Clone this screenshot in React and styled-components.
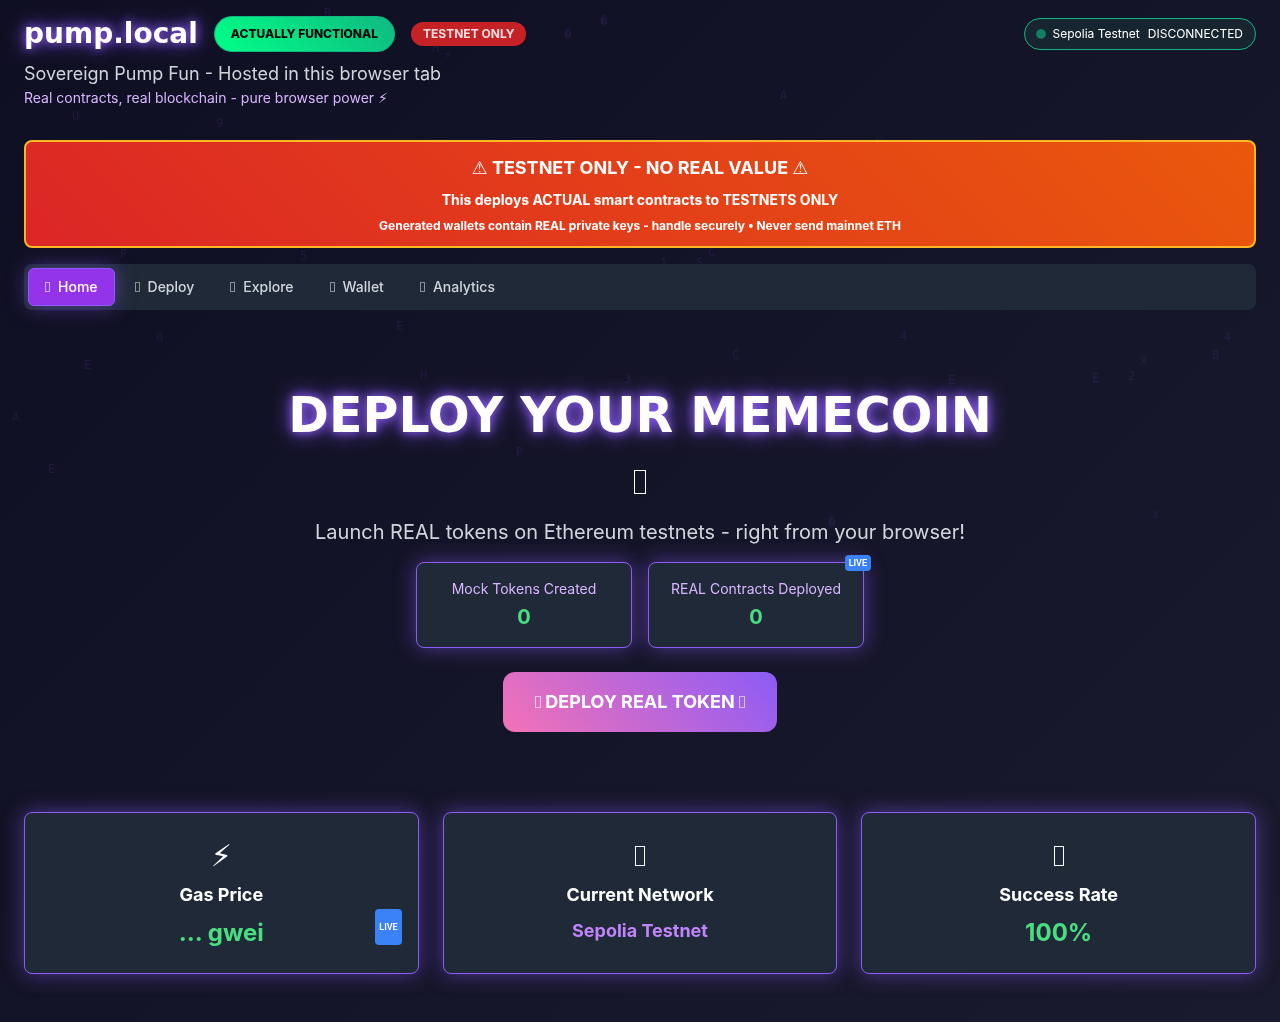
import styled, { createGlobalStyle, css } from "styled-components";

const GlobalStyle = createGlobalStyle`
  * {
    box-sizing: border-box;
    margin: 0;
    padding: 0;
  }
  body {
    min-height: 100vh;
    background: linear-gradient(135deg, #0f0f23 0%, #1a1a2e 100%);
    color: #fff;
    font-family: Inter, "Liberation Sans", sans-serif;
    font-size: 16px;
    line-height: 24px;
  }
`;

// BACKGROUND
const Rain = styled.div`
  position: fixed;
  inset: 0;
  overflow: hidden;
  pointer-events: none;
  user-select: none;
`;
const RainDrop = styled.span`
  position: absolute;
  color: #8b5cf6;
  opacity: 0.12;
  font-family: "DejaVu Sans Mono", monospace;
  font-size: 12px;
  line-height: 14px;
`;
// END BACKGROUND

const Page = styled.div`
  position: relative;
  padding: 16px 24px 48px;
`;
const glow = css`
  box-shadow: 0 0 20px rgba(139, 92, 246, 0.5);
`;

// SYMBOLS
const Symbol = styled.span`
  font-family: "DejaVu Sans", sans-serif;
  font-variant-emoji: text;
`;
const Box = styled.span`
  display: inline-block;
  width: ${(p) => p.$size[0]}px;
  height: ${(p) => p.$size[1]}px;
  border: 1px solid currentColor;
  opacity: ${(p) => (p.$dim ? 0.6 : 1)};
`;
// END SYMBOLS

// HEADER
const Header = styled.header`
  display: flex;
  justify-content: space-between;
  align-items: flex-start;
  margin-bottom: 32px;
`;
const Brand = styled.div`
  display: flex;
  align-items: center;
  gap: 16px;
  height: 36px;
  margin-bottom: 8px;
`;
const Logo = styled.h1`
  font-family: "DejaVu Sans", sans-serif;
  font-size: 28px;
  font-weight: 700;
  line-height: 36px;
  text-shadow: 0 0 10px #8b5cf6, 0 0 20px #8b5cf6;
`;
const FunctionalBadge = styled.span`
  padding: 8px 16px;
  border: 1px solid #10b981;
  border-radius: 20px;
  background: linear-gradient(45deg, #00ff88, #10b981);
  color: #0a0a0a;
  font-size: 12px;
  font-weight: 800;
  line-height: 18px;
`;
const TestnetBadge = styled.span`
  padding: 4px 12px;
  border-radius: 12px;
  background: #c52226;
  color: #f3dcdf;
  font-size: 12px;
  font-weight: 700;
  line-height: 16px;
`;
const Tagline = styled.p`
  color: #d1d5db;
  font-size: 18px;
  line-height: 28px;
`;
const Subline = styled.p`
  color: #d8b4fe;
  font-size: 14px;
  line-height: 20px;
`;
const NetworkStatus = styled.div`
  display: flex;
  align-items: center;
  gap: 8px;
  margin-top: 2px;
  padding: 7px 12px;
  border: 1px solid #10b981;
  border-radius: 20px;
  background: #172530;
  font-size: 12px;
  line-height: 16px;
`;
const StatusDot = styled.span`
  width: 8px;
  height: 8px;
  border-radius: 50%;
  background: #128061;
  box-shadow: 0 0 0 1px #147259;
`;
// END HEADER

const Warning = styled.section`
  margin-bottom: 16px;
  padding: 12px 16px;
  border: 2px solid #fbb724;
  border-radius: 8px;
  background: linear-gradient(45deg, #dc2626, #ea580c);
  font-weight: 700;
  text-align: center;
`;
const WarningTitle = styled.h2`
  font-size: 18px;
  line-height: 28px;
`;
const WarningText = styled.p`
  margin-top: 8px;
  font-size: 14px;
  line-height: 20px;
`;
const WarningNote = styled.p`
  margin-top: 8px;
  font-size: 12px;
  line-height: 16px;
`;

// TABS
const Tabs = styled.nav`
  display: flex;
  gap: 4px;
  padding: 4px;
  border-radius: 8px;
  background: #1f2937;
`;
const Tab = styled.button`
  display: flex;
  align-items: center;
  gap: 8px;
  padding: 8px 16px;
  border: ${(p) => (p.$active ? "1px solid #8b5cf6" : "0")};
  border-radius: 6px;
  background: ${(p) => (p.$active ? "#9333ea" : "transparent")};
  color: ${(p) => (p.$active ? "#fff" : "#d1d5db")};
  font-family: inherit;
  font-size: 14px;
  font-weight: 500;
  line-height: 20px;
  cursor: pointer;
  ${(p) => p.$active && glow}
`;
// END TABS

// HERO
const Hero = styled.section`
  display: flex;
  flex-direction: column;
  align-items: center;
  padding: 80px 0;
  text-align: center;
`;
const HeroTitle = styled.h2`
  font-family: "DejaVu Sans", sans-serif;
  font-size: 49px;
  font-weight: 700;
  line-height: 52px;
  text-shadow: 0 0 10px #8b5cf6, 0 0 20px #8b5cf6;
`;
const HeroIcon = styled.div`
  display: flex;
  align-items: center;
  height: 40px;
  margin: 20px 0 16px;
`;
const HeroText = styled.p`
  margin-bottom: 16px;
  color: #d1d5db;
  font-size: 20px;
  line-height: 28px;
`;
const Stats = styled.div`
  display: grid;
  grid-template-columns: 1fr 1fr;
  gap: 16px;
  width: 100%;
  max-width: 448px;
  margin-bottom: 24px;
`;
const Card = styled.div`
  position: relative;
  border: 1px solid #8b5cf6;
  border-radius: 8px;
  background: #1f2937;
  ${glow}
`;
const StatCard = styled(Card)`
  padding: 16px;
`;
const StatLabel = styled.p`
  color: #d8b4fe;
  font-size: 14px;
  line-height: 20px;
`;
const StatValue = styled.p`
  margin-top: 4px;
  color: #4ade80;
  font-size: 20px;
  font-weight: 700;
  line-height: 28px;
`;
const CornerBadge = styled.span`
  position: absolute;
  top: -8px;
  right: -8px;
  padding: 2px 4px;
  border-radius: 4px;
  background: #3b82f6;
  color: #fff;
  font-family: Roboto, sans-serif;
  font-size: 9px;
  font-weight: 600;
  line-height: 12px;
`;
const DeployButton = styled.button`
  padding: 16px 32px;
  border: 0;
  border-radius: 12px;
  background: linear-gradient(45deg, #f472b6, #8b5cf6);
  color: #fff;
  font-family: inherit;
  font-size: 18px;
  font-weight: 700;
  line-height: 28px;
  cursor: pointer;
`;
// END HERO

// METRICS
const Metrics = styled.section`
  display: grid;
  grid-template-columns: repeat(3, 1fr);
  gap: 24px;
`;
const MetricCard = styled(Card)`
  padding: 24px 16px;
  text-align: center;
`;
const MetricIcon = styled.div`
  display: flex;
  align-items: center;
  justify-content: center;
  height: 38px;
  margin-bottom: 6px;
  font-size: 30px;
  line-height: 38px;
`;
const MetricTitle = styled.h3`
  margin-bottom: 8px;
  font-size: 18px;
  font-weight: 700;
  line-height: 28px;
`;
const MetricValue = styled.p`
  color: ${(p) => (p.$accent ? "#c084fc" : "#4ade80")};
  font-size: ${(p) => (p.$accent ? "18px" : "24px")};
  font-weight: 700;
  line-height: ${(p) => (p.$accent ? "28px" : "32px")};
`;
const SideBadge = styled(CornerBadge)`
  top: auto;
  right: 16px;
  bottom: 28px;
  line-height: 32px;
`;
// END METRICS

const BOLT = "\u26A1\uFE0E";
const WARN = "\u26A0\uFE0E";

const drops = [
  ["B", 324, 6],
  ["\uFFFD", 600, 14],
  ["\uFFFD", 564, 27],
  ["H", 432, 41],
  [BOLT, 444, 48],
  ["U", 72, 109],
  ["9", 216, 116],
  ["A", 780, 88],
  ["U", 876, 135],
  ["P", 120, 247],
  ["5", 300, 249],
  ["C", 708, 245],
  ["5", 696, 256],
  ["1", 660, 256],
  ["E", 396, 319],
  ["0", 156, 331],
  ["E", 84, 358],
  ["A", 12, 410],
  ["E", 48, 462],
  ["H", 420, 368],
  ["3", 624, 372],
  ["P", 516, 445],
  ["C", 732, 348],
  [BOLT, 768, 382],
  ["4", 900, 329],
  ["E", 948, 373],
  ["E", 1092, 371],
  ["2", 1128, 369],
  ["x", 1140, 353],
  ["B", 1212, 348],
  ["4", 1224, 330],
  ["x", 1152, 507],
  ["\uFFFD", 828, 515],
];

const tabs = ["Home", "Deploy", "Explore", "Wallet", "Analytics"];

const metrics = [
  { icon: BOLT, title: "Gas Price", value: "... gwei", live: true },
  { title: "Current Network", value: "Sepolia Testnet", accent: true },
  { title: "Success Rate", value: "100%" },
];

const App = () => {
  return (
    <>
      <GlobalStyle />
      <Rain aria-hidden="true">
        {drops.map(([char, left, top]) => (
          <RainDrop key={`${left}-${top}`} style={{ left, top }}>
            {char}
          </RainDrop>
        ))}
      </Rain>
      <Page>
        <Header>
          <div>
            <Brand>
              <Logo>pump.local</Logo>
              <FunctionalBadge>ACTUALLY FUNCTIONAL</FunctionalBadge>
              <TestnetBadge>TESTNET ONLY</TestnetBadge>
            </Brand>
            <Tagline>Sovereign Pump Fun - Hosted in this browser tab</Tagline>
            <Subline>
              Real contracts, real blockchain - pure browser power <Symbol>{BOLT}</Symbol>
            </Subline>
          </div>
          <NetworkStatus>
            <StatusDot />
            <span>Sepolia Testnet</span>
            <span>DISCONNECTED</span>
          </NetworkStatus>
        </Header>
        <Warning>
          <WarningTitle>
            <Symbol>{WARN}</Symbol> TESTNET ONLY - NO REAL VALUE <Symbol>{WARN}</Symbol>
          </WarningTitle>
          <WarningText>This deploys ACTUAL smart contracts to TESTNETS ONLY</WarningText>
          <WarningNote>
            Generated wallets contain REAL private keys - handle securely • Never send mainnet ETH
          </WarningNote>
        </Warning>
        <Tabs>
          {tabs.map((label, i) => (
            <Tab key={label} type="button" $active={i === 0}>
              <Box $size={[5, 10]} $dim />
              <span>{label}</span>
            </Tab>
          ))}
        </Tabs>
        <Hero>
          <HeroTitle>DEPLOY YOUR MEMECOIN</HeroTitle>
          <HeroIcon>
            <Box $size={[12, 24]} />
          </HeroIcon>
          <HeroText>Launch REAL tokens on Ethereum testnets - right from your browser!</HeroText>
          <Stats>
            <StatCard>
              <StatLabel>Mock Tokens Created</StatLabel>
              <StatValue>0</StatValue>
            </StatCard>
            <StatCard>
              <StatLabel>REAL Contracts Deployed</StatLabel>
              <StatValue>0</StatValue>
              <CornerBadge>LIVE</CornerBadge>
            </StatCard>
          </Stats>
          <DeployButton type="button">
            <Box $size={[6, 12]} $dim /> DEPLOY REAL TOKEN <Box $size={[6, 12]} $dim />
          </DeployButton>
        </Hero>
        <Metrics>
          {metrics.map((m) => (
            <MetricCard key={m.title}>
              <MetricIcon>
                {m.icon ? <Symbol>{m.icon}</Symbol> : <Box $size={[10, 20]} />}
              </MetricIcon>
              <MetricTitle>{m.title}</MetricTitle>
              <MetricValue $accent={m.accent}>{m.value}</MetricValue>
              {m.live && <SideBadge>LIVE</SideBadge>}
            </MetricCard>
          ))}
        </Metrics>
      </Page>
    </>
  );
};

export default App;
